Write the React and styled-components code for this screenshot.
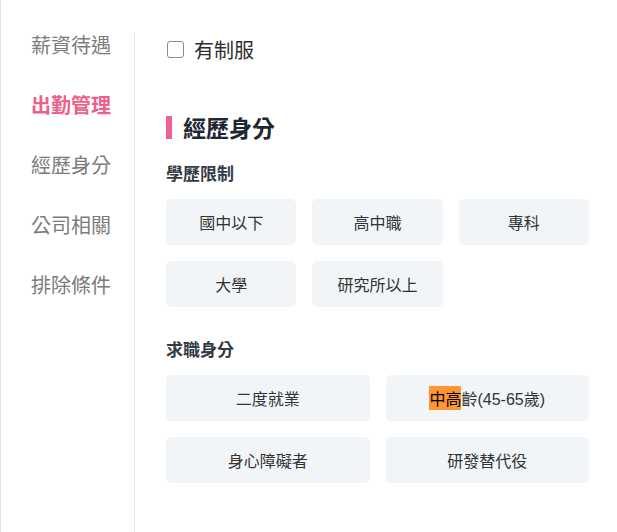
import React from 'react';
import styled, { createGlobalStyle } from 'styled-components';

const GlobalStyle = createGlobalStyle`
    body {
        margin: 0;
        background: #FFFFFF;
        font-family: "Liberation Sans", "Noto Sans CJK TC", sans-serif;
    }
`

const navItems = ['薪資待遇', '出勤管理', '經歷身分', '公司相關', '排除條件'];
const educationOptions = ['國中以下', '高中職', '專科', '大學', '研究所以上'];
const identityOptions = [
    { label: '二度就業' },
    { label: '齡(45-65歲)', highlight: '中高' },
    { label: '身心障礙者' },
    { label: '研發替代役' },
];

const App = () => {
    return (
        <>
            <GlobalStyle />
            <Page>
                <Sidebar>
                    {navItems.map((item) => (
                        <NavItem key={item} active={item === '出勤管理'}>
                            {item}
                        </NavItem>
                    ))}
                </Sidebar>
                <Content>
                    <CheckRow>
                        <CheckBox />
                        <CheckLabel>有制服</CheckLabel>
                    </CheckRow>

                    <SectionTitle>經歷身分</SectionTitle>

                    <GroupTitle>學歷限制</GroupTitle>
                    <OptionGrid columns={3}>
                        {educationOptions.map((option) => (
                            <Option key={option}>{option}</Option>
                        ))}
                    </OptionGrid>

                    <GroupTitle spaced>求職身分</GroupTitle>
                    <OptionGrid columns={2}>
                        {identityOptions.map((option) => (
                            <Option key={option.label}>
                                {option.highlight && <Match>{option.highlight}</Match>}
                                {option.label}
                            </Option>
                        ))}
                    </OptionGrid>
                </Content>
            </Page>
        </>
    );
};

// Styles

const Page = styled.div`
    display: flex;
    min-height: 532px;
    padding: 32px 28px 0 0;
    box-sizing: border-box;
    border-left: 1px solid #E2E2E2;
`

const Sidebar = styled.nav`
    width: 103px;
    padding-left: 30px;
    display: flex;
    flex-direction: column;
    gap: 32px;
    border-right: 1px solid #EBEBEB;
`

const NavItem = styled.div`
    font-size: 20px;
    line-height: 28px;
    white-space: nowrap;
    color: ${(props) => (props.active ? '#EE5F8A' : '#7B7B7B')};
    font-weight: ${(props) => (props.active ? 700 : 400)};
    cursor: pointer;
`

const Content = styled.main`
    flex: 1;
    padding-left: 31px;
`

const CheckRow = styled.label`
    display: flex;
    align-items: center;
    gap: 10px;
    height: 34px;
`

const CheckBox = styled.span`
    width: 15px;
    height: 15px;
    margin-left: 1px;
    border: 1.5px solid #8A8A8A;
    border-radius: 3px;
    background: #FFFFFF;
`

const CheckLabel = styled.span`
    font-size: 20px;
    color: #2E2E2E;
`

const SectionTitle = styled.h2`
    display: flex;
    align-items: center;
    gap: 11px;
    height: 32px;
    margin: 45px 0 0;
    font-size: 23px;
    font-weight: 700;
    color: #1E2833;

    &::before {
        content: '';
        width: 6px;
        height: 23px;
        background: #F0628E;
    }
`

const GroupTitle = styled.h3`
    margin: ${(props) => (props.spaced ? '32px' : '20px')} 0 0;
    font-size: 17px;
    line-height: 24px;
    font-weight: 700;
    color: #333B45;
`

const OptionGrid = styled.div`
    display: grid;
    grid-template-columns: repeat(${(props) => props.columns}, 1fr);
    gap: 16px;
    margin-top: 12px;
`

const Option = styled.div`
    height: 46px;
    display: flex;
    align-items: center;
    justify-content: center;
    border-radius: 5px;
    background: #F2F5F8;
    font-size: 16px;
    color: #333333;
    cursor: pointer;
`

const Match = styled.mark`
    background: #FF9632;
    color: #000000;
`

export default App;
